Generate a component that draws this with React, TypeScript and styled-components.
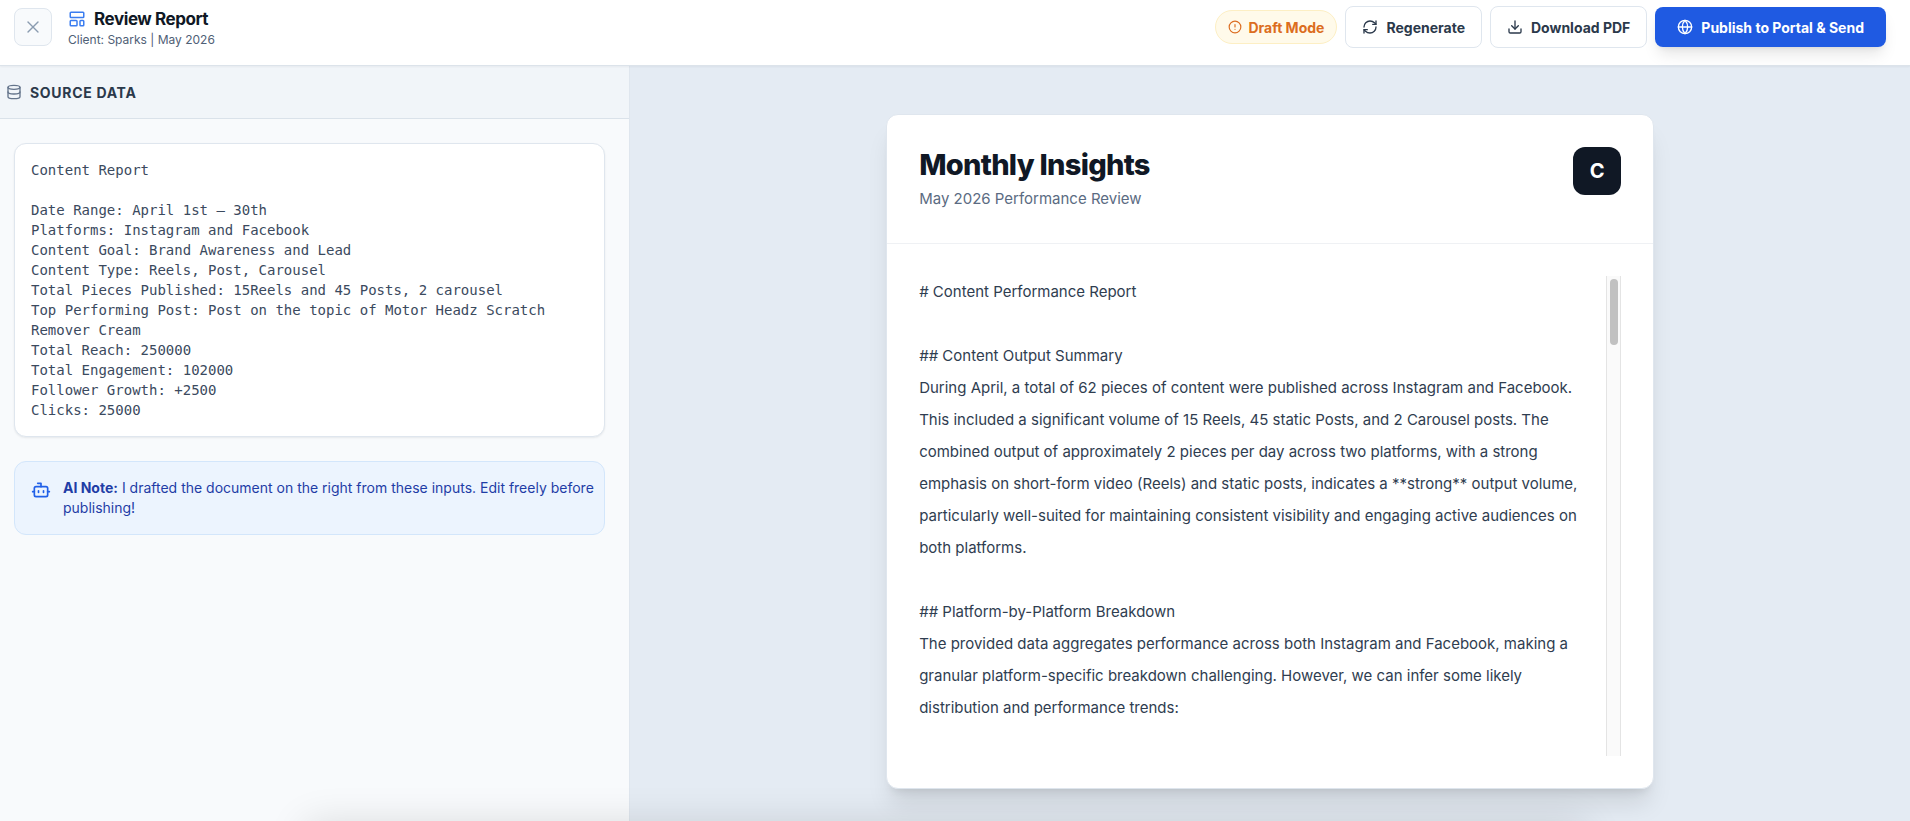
import React, { useState } from "react";
import styled, { createGlobalStyle } from "styled-components";
import {
  Bot,
  CircleAlert,
  Database,
  Download,
  Globe,
  LayoutTemplate,
  RefreshCw,
  X,
} from "lucide-react";

const GlobalStyle = createGlobalStyle`
  *, *::before, *::after { box-sizing: border-box; }
  html, body { margin: 0; height: 100%; }
  #root { height: 100%; }
  body {
    font-family: Inter, "Liberation Sans", sans-serif;
    color: #101825;
    -webkit-font-smoothing: antialiased;
  }
  h1, h2, p, pre { margin: 0; }
  button, textarea { font-family: inherit; }
`;

const Page = styled.div`
  display: flex;
  flex-direction: column;
  height: 100vh;
  overflow: hidden;
  position: relative;
`;

const TopBar = styled.header`
  display: flex;
  align-items: center;
  justify-content: space-between;
  padding: 6px 24px 17px 14px;
  background: #fff;
  border-bottom: 1px solid #dce3ea;
  box-shadow: 0 1px 2px rgba(15, 23, 42, 0.05);
  z-index: 1;
`;

const Cluster = styled.div<{ $gap: number }>`
  display: flex;
  align-items: center;
  gap: ${(p) => p.$gap}px;
`;

const CloseButton = styled.button`
  display: grid;
  place-items: center;
  width: 38px;
  height: 38px;
  padding: 0;
  color: #8a9bb0;
  background: #f8fafc;
  border: 1px solid #dfe6ee;
  border-radius: 8px;
`;

const PageTitle = styled.h1`
  display: flex;
  align-items: center;
  gap: 8px;
  font-size: 17px;
  line-height: 26px;
  font-weight: 700;
  letter-spacing: -0.025em;

  svg { color: #3b7df0; }
`;

const Subtitle = styled.p`
  font-size: 12px;
  line-height: 16px;
  color: #4f6076;
`;

const StatusPill = styled.span`
  display: inline-flex;
  align-items: center;
  gap: 6px;
  height: 34px;
  padding: 0 12px;
  font-size: 14px;
  font-weight: 700;
  color: #dc6d20;
  background: #fffaea;
  border: 1px solid #fdefc4;
  border-radius: 17px;
`;

const ActionButton = styled.button<{ $primary?: boolean }>`
  display: inline-flex;
  align-items: center;
  gap: 8px;
  height: ${(p) => (p.$primary ? 40 : 42)}px;
  padding: 0 ${(p) => (p.$primary ? 22 : 16)}px;
  font-size: 14px;
  font-weight: 700;
  white-space: nowrap;
  color: ${(p) => (p.$primary ? "#fff" : "#2b394b")};
  background: ${(p) => (p.$primary ? "#1f5ae2" : "#fff")};
  border: ${(p) => (p.$primary ? "0" : "1px solid #dfe6ee")};
  border-radius: 8px;
  box-shadow: ${(p) =>
    p.$primary
      ? "0 10px 15px -3px rgba(0, 0, 0, 0.1), 0 4px 6px -4px rgba(0, 0, 0, 0.1)"
      : "none"};
`;

const Workspace = styled.main`
  display: flex;
  flex: 1;
  min-height: 0;
`;

const SourcePanel = styled.aside`
  flex: 0 0 33%;
  background: #f8fafc;
  border-right: 1px solid #dfe6ee;
`;

const SourceHeading = styled.h2`
  display: flex;
  align-items: center;
  gap: 8px;
  height: 53px;
  padding: 0 6px;
  font-size: 14px;
  font-weight: 700;
  letter-spacing: 0.05em;
  text-transform: uppercase;
  color: #2b394b;
  background: #f1f5f9;
  border-bottom: 1px solid #dae2ea;

  svg { color: #64748b; }
`;

const SourceBody = styled.div`
  display: flex;
  flex-direction: column;
  gap: 24px;
  padding: 24px 24px 24px 14px;
`;

const SourceText = styled.pre`
  padding: 16px;
  font-family: "DejaVu Sans Mono", monospace;
  font-size: 14px;
  line-height: 20px;
  white-space: pre-wrap;
  color: #3b4a5e;
  background: #fff;
  border: 1px solid #dfe6ee;
  border-radius: 12px;
  box-shadow: 0 1px 2px rgba(15, 23, 42, 0.08);
`;

const Note = styled.div`
  display: flex;
  align-items: flex-start;
  gap: 12px;
  padding: 16px 8px 16px 16px;
  font-size: 14px;
  line-height: 20px;
  color: #1f3da6;
  background: #ecf4fe;
  border: 1px solid #d3e6fb;
  border-radius: 12px;

  svg {
    flex: none;
    margin-top: 2px;
    color: #2160e8;
  }
`;

const Canvas = styled.section`
  flex: 1;
  min-width: 0;
  padding: 48px;
  overflow: hidden;
  background: #e4ebf3;
`;

const Sheet = styled.article`
  max-width: 768px;
  margin: 0 auto;
  background: #fff;
  border: 1px solid #dfe6ee;
  border-radius: 12px;
  box-shadow: 0 20px 25px -5px rgba(0, 0, 0, 0.1), 0 8px 10px -6px rgba(0, 0, 0, 0.1);
`;

const SheetHeader = styled.header`
  display: flex;
  align-items: flex-start;
  justify-content: space-between;
  padding: 32px;
  border-bottom: 1px solid #eff1f4;
`;

const SheetTitle = styled.h2`
  font-size: 29px;
  line-height: 36px;
  font-weight: 800;
  letter-spacing: -0.025em;
`;

const SheetSubtitle = styled.p`
  margin-top: 4px;
  font-size: 15px;
  line-height: 24px;
  color: #5b6b82;
`;

const Monogram = styled.div`
  display: grid;
  place-items: center;
  width: 48px;
  height: 48px;
  font-size: 20px;
  font-weight: 700;
  color: #fff;
  background: #101825;
  border-radius: 12px;
`;

const SheetBody = styled.div`
  display: flex;
  padding: 32px;
`;

const Editor = styled.textarea`
  flex: 1;
  min-width: 0;
  height: 480px;
  padding: 0 12px 0 0;
  font-size: 15px;
  line-height: 32px;
  color: #2f3d50;
  background: transparent;
  border: 0;
  outline: 0;
  resize: none;
  scrollbar-width: none;
`;

const ScrollTrack = styled.div`
  width: 15px;
  padding: 3px 2px 3px 3px;
  background: #fafafa;
  border: solid #e4e4e4;
  border-width: 0 1px;
`;

const ScrollThumb = styled.div`
  height: 66px;
  background: #c1c1c1;
  border-radius: 4px;
`;

const DockShadow = styled.div`
  position: absolute;
  top: 100%;
  left: 16%;
  right: 17%;
  height: 60px;
  box-shadow: 0 4px 40px rgba(0, 0, 0, 0.14);
  pointer-events: none;
`;

const SOURCE = `Content Report

Date Range: April 1st – 30th
Platforms: Instagram and Facebook
Content Goal: Brand Awareness and Lead
Content Type: Reels, Post, Carousel
Total Pieces Published: 15Reels and 45 Posts, 2 carousel
Top Performing Post: Post on the topic of Motor Headz Scratch Remover Cream
Total Reach: 250000
Total Engagement: 102000
Follower Growth: +2500
Clicks: 25000`;

const DRAFT = `# Content Performance Report

## Content Output Summary
During April, a total of 62 pieces of content were published across Instagram and Facebook. This included a significant volume of 15 Reels, 45 static Posts, and 2 Carousel posts. The combined output of approximately 2 pieces per day across two platforms, with a strong emphasis on short-form video (Reels) and static posts, indicates a **strong** output volume, particularly well-suited for maintaining consistent visibility and engaging active audiences on both platforms.

## Platform-by-Platform Breakdown
The provided data aggregates performance across both Instagram and Facebook, making a granular platform-specific breakdown challenging. However, we can infer some likely distribution and performance trends:`;

export default function App() {
  const [draft, setDraft] = useState(DRAFT);

  return (
    <>
      <GlobalStyle />
      <Page>
        <TopBar>
          <Cluster $gap={16}>
            <CloseButton type="button" aria-label="Close">
              <X size={20} strokeWidth={1.6} />
            </CloseButton>
            <div>
              <PageTitle>
                <LayoutTemplate size={18} />
                Review Report
              </PageTitle>
              <Subtitle>Client: Sparks | May 2026</Subtitle>
            </div>
          </Cluster>
          <Cluster $gap={8}>
            <StatusPill>
              <CircleAlert size={14} />
              Draft Mode
            </StatusPill>
            <ActionButton type="button">
              <RefreshCw size={16} />
              Regenerate
            </ActionButton>
            <ActionButton type="button">
              <Download size={16} />
              Download PDF
            </ActionButton>
            <ActionButton type="button" $primary>
              <Globe size={16} />
              Publish to Portal &amp; Send
            </ActionButton>
          </Cluster>
        </TopBar>
        <Workspace>
          <SourcePanel>
            <SourceHeading>
              <Database size={16} />
              Source Data
            </SourceHeading>
            <SourceBody>
              <SourceText>{SOURCE}</SourceText>
              <Note>
                <Bot size={20} />
                <p>
                  <strong>AI Note:</strong> I drafted the document on the right from these inputs.
                  Edit freely before publishing!
                </p>
              </Note>
            </SourceBody>
          </SourcePanel>
          <Canvas>
            <Sheet>
              <SheetHeader>
                <div>
                  <SheetTitle>Monthly Insights</SheetTitle>
                  <SheetSubtitle>May 2026 Performance Review</SheetSubtitle>
                </div>
                <Monogram>C</Monogram>
              </SheetHeader>
              <SheetBody>
                <Editor
                  aria-label="Report draft"
                  spellCheck={false}
                  value={draft}
                  onChange={(e) => setDraft(e.target.value)}
                />
                <ScrollTrack aria-hidden="true">
                  <ScrollThumb />
                </ScrollTrack>
              </SheetBody>
            </Sheet>
          </Canvas>
        </Workspace>
        <DockShadow />
      </Page>
    </>
  );
}
